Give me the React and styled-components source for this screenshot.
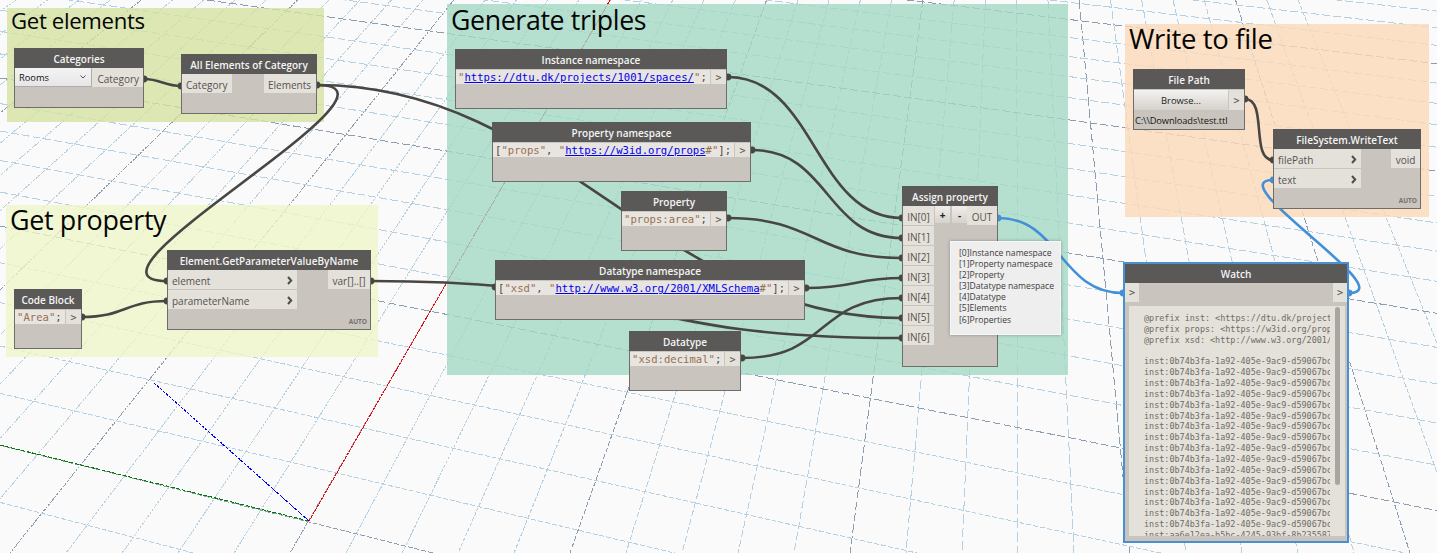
import React from "react";
import styled, { createGlobalStyle } from "styled-components";

const Global = createGlobalStyle`
  html, body { margin: 0; padding: 0; background: #fafafa; }
  #root { width: 1437px; height: 553px; }
`;

const Canvas = styled.div`
  position: relative;
  width: 1437px;
  height: 553px;
  overflow: hidden;
  background: #fafafa;
  font-family: "Open Sans", "Noto Sans", sans-serif;
`;

const Layer = styled.svg`
  position: absolute;
  left: 0;
  top: 0;
  width: 1437px;
  height: 553px;
  z-index: ${(p) => p.$z};
`;

const Group = styled.section`
  position: absolute;
  left: ${(p) => p.$x}px;
  top: ${(p) => p.$y}px;
  width: ${(p) => p.$w}px;
  height: ${(p) => p.$h}px;
  background: ${(p) => p.$bg};
  z-index: 1;
`;

const GroupTitle = styled.h2`
  margin: 0;
  padding: 0 0 0 4px;
  font-size: ${(p) => p.$size}px;
  line-height: ${(p) => p.$line}px;
  font-weight: 400;
  color: #050505;
  letter-spacing: -0.35px;
  white-space: nowrap;
`;

const NodeBox = styled.article`
  position: absolute;
  left: ${(p) => p.$x}px;
  top: ${(p) => p.$y}px;
  width: ${(p) => p.$w}px;
  height: ${(p) => p.$h}px;
  box-sizing: border-box;
  background: #c9c4bd;
  border: ${(p) => (p.$selected ? "2px solid #4a8fcf" : "1px solid #6f6d69")};
  z-index: 3;
  display: flex;
  flex-direction: column;
`;

const Header = styled.header`
  flex: 0 0 ${(p) => (p.$selected ? 19 : 20)}px;
  box-sizing: border-box;
  padding-top: 1px;
  background: #5b5957;
  color: #f4f4f4;
  font-size: 10px;
  font-weight: 600;
  display: flex;
  align-items: center;
  justify-content: center;
  white-space: nowrap;
  margin: ${(p) => (p.$selected ? 0 : "-1px -1px 0")};
`;

const Columns = styled.div`
  display: flex;
  justify-content: space-between;
  align-items: flex-start;
`;

const Stack = styled.div`
  display: flex;
  flex-direction: column;
  gap: ${(p) => p.$gap || 0}px;
`;

const Port = styled.div`
  width: ${(p) => (p.$w ? `${p.$w}px` : "auto")};
  height: ${(p) => p.$h || 19}px;
  box-sizing: border-box;
  padding: 2px 4px 0;
  background: #e4e0da;
  color: #55524f;
  font-size: 10px;
  display: flex;
  align-items: center;
  justify-content: ${(p) => p.$justify || "space-between"};
  white-space: nowrap;
`;

const Chevron = () => (
  <svg width="6" height="9" viewBox="0 0 6 9" fill="none">
    <path d="M1 1l3.2 3.5L1 8" stroke="#4f4d4a" strokeWidth="2" />
  </svg>
);

const Dropdown = styled.div`
  width: 77px;
  height: 19px;
  box-sizing: border-box;
  padding: 0 5px 0 4px;
  background: linear-gradient(#f4f4f4, #e6e6e6);
  border-right: 1px solid #b0aeab;
  border-bottom: 1px solid #b0aeab;
  color: #111;
  font-size: 9.3px;
  display: flex;
  align-items: center;
  justify-content: space-between;
`;

const CodeRow = styled.div`
  display: flex;
  height: ${(p) => p.$h || 14}px;
  margin-top: 1px;
  gap: 1px;
`;

const CodeText = styled.div`
  flex: 1;
  min-width: 0;
  background: #e8e4df;
  padding-left: 2px;
  font-family: "DejaVu Sans Mono", "Liberation Mono", monospace;
  font-size: 10.6px;
  line-height: 14px;
  white-space: nowrap;
  overflow: hidden;
  color: #4d4a47;
`;

const Str = styled.span`
  color: #96714f;
`;

const Link = styled.a`
  color: #0000ee;
  text-decoration: underline;
`;

const Out = styled.div`
  flex: 0 0 ${(p) => p.$w || 15}px;
  height: ${(p) => (p.$h ? `${p.$h}px` : "auto")};
  background: #e4e0da;
  color: #55524f;
  font-family: "DejaVu Sans Mono", "Liberation Mono", monospace;
  font-size: 10px;
  display: flex;
  align-items: center;
  justify-content: center;
`;

const Auto = styled.span`
  position: absolute;
  right: 3px;
  bottom: 3px;
  font-size: 6.5px;
  line-height: 8px;
  font-weight: 700;
  color: #75726e;
`;

const Controls = styled.div`
  display: flex;
  flex: 1;
  gap: 2px;
  padding-left: 1px;
`;

const RoundBtn = styled.div`
  width: 15px;
  height: 17px;
  background: linear-gradient(#f0eeeb, #d6d2cc);
  color: #222;
  font-size: 10px;
  font-weight: 700;
  display: flex;
  align-items: center;
  justify-content: center;
`;

const Browse = styled.div`
  flex: 1;
  background: linear-gradient(#f3f2f0, #d5d1cb);
  color: #222;
  font-size: 9.4px;
  display: flex;
  align-items: center;
  justify-content: center;
`;

const PathText = styled.div`
  padding: 4px 0 0 1px;
  font-size: 9.3px;
  line-height: 14px;
  color: #151515;
  white-space: nowrap;
  letter-spacing: -0.1px;
`;

const Tooltip = styled.aside`
  position: absolute;
  left: 950px;
  top: 241px;
  width: 111px;
  height: 94px;
  box-sizing: border-box;
  padding: 6px 0 0 8px;
  background: #eeeeee;
  border: 1px solid #f6f6f6;
  box-shadow: 0 0 3px rgba(70, 70, 70, 0.45);
  color: #3b3b3b;
  font-size: 8.6px;
  line-height: 11.1px;
  white-space: nowrap;
  z-index: 5;
`;

const WatchPanel = styled.div`
  margin: 4px 2px 5px 4px;
  position: relative;
  flex: 1;
  background: #e4e0da;
  overflow: hidden;
`;

const WatchText = styled.pre`
  margin: 0;
  position: absolute;
  left: 15px;
  top: 7px;
  width: 186px;
  height: 224px;
  overflow: hidden;
  font-family: "DejaVu Sans Mono", "Liberation Mono", monospace;
  font-size: 8.45px;
  line-height: 10.85px;
  color: #706c67;
`;

const ScrollThumb = styled.div`
  position: absolute;
  top: 1px;
  left: 206px;
  width: 5px;
  height: 178px;
  border-radius: 3px;
  background: #a9a5a0;
`;

const VAX = 1015, VAY = -699;
const VBX = -4323, VBY = -630;
const B0 = (k) => -686 + 1 / (0.000884 + 0.0000425 * k);

function gridLines() {
  const lines = [];
  for (let k = -22; k <= 22; k++) {
    const x553 = 290 + 56 * k;
    const at = (y) => VAX + ((x553 - VAX) * (y - VAY)) / (553 - VAY);
    const major = k % 5 === 0;
    const slope = Math.abs((x553 - VAX) / (553 - VAY));
    const t = Math.min(1, slope / 0.55);
    lines.push({
      key: `a${k}`,
      x1: at(0), y1: 0, x2: at(553), y2: 553,
      stroke: major ? "#8b9daf" : "#b5d0e3",
      dash: `${(10 - 7.6 * t).toFixed(1)} ${(4 - 3 * t).toFixed(1)}`,
    });
  }
  for (let k = -4; k <= 28; k++) {
    const y0 = B0(k);
    const s = (y0 - VBY) / (0 - VBX);
    const major = k % 5 === 0;
    lines.push({
      key: `b${k}`,
      x1: 0, y1: y0, x2: 1437, y2: y0 + s * 1437,
      stroke: major ? "#8b9daf" : "#b5d0e3",
      dash: s > 0.2 ? "5 2" : "8 3",
    });
  }
  return lines;
}

const Grid = () => (
  <Layer $z={0} viewBox="0 0 1437 553" shapeRendering="crispEdges" fill="none">
    {gridLines().map((l) => (
      <line key={l.key} x1={l.x1} y1={l.y1} x2={l.x2} y2={l.y2} stroke={l.stroke} strokeDasharray={l.dash} />
    ))}
    <line x1="0" y1="445" x2="309" y2="521" stroke="#007a00" strokeDasharray="4 1.5" />
    <line x1="154" y1="383" x2="309" y2="521" stroke="#0000e6" strokeDasharray="3 1" />
    <line x1="309" y1="521" x2="610" y2="0" stroke="#f00000" strokeDasharray="3 1" />
  </Layer>
);

const dark = [
  "M144 79C160 79 165 86 181 86",
  "M317 85C427 85 57 281 167 281",
  "M317 85C560 85 660 318 902 318",
  "M371 281C650 281 620 338 902 338",
  "M728 77C815 77 815 218 902 218",
  "M752 150C830 150 825 238 902 238",
  "M728 218C815 218 815 258 902 258",
  "M806 288C855 288 855 278 902 278",
  "M742 358C830 358 815 298 902 298",
  "M82 317C125 317 125 301 167 301",
  "M1245 99C1268 99 1250 160 1273 160",
];
const blue = [
  "M998 218C1060 218 1060 293 1123 293",
  "M1349 293C1404 293 1218 180 1273 180",
];
const darkEnds = [
  [144, 79], [181, 86], [317, 85], [167, 281], [371, 281], [495, 287], [902, 318], [902, 338],
  [728, 77], [902, 218], [752, 150], [902, 238], [728, 218], [902, 258], [806, 288], [902, 278],
  [742, 358], [902, 298], [82, 317], [167, 301], [1245, 99], [1273, 160],
];
const blueEnds = [[998, 218], [1123, 293], [1349, 293], [1273, 180]];

const Wires = () => (
  <Layer $z={2} viewBox="0 0 1437 553" fill="none">
    {dark.map((d) => (
      <path key={d} d={d} stroke="#474644" strokeWidth="2.6" />
    ))}
    {blue.map((d) => (
      <path key={d} d={d} stroke="#4390d8" strokeWidth="2.6" />
    ))}
    {darkEnds.map(([x, y]) => (
      <circle key={`${x}-${y}`} cx={x} cy={y} r="3.4" fill="#474644" />
    ))}
    {blueEnds.map(([x, y]) => (
      <circle key={`${x}-${y}`} cx={x} cy={y} r="3.4" fill="#4390d8" />
    ))}
  </Layer>
);

const Node = ({ title, x, y, w, h, selected, children }) => (
  <NodeBox $x={x} $y={y} $w={w} $h={h} $selected={selected}>
    <Header $selected={selected}>{title}</Header>
    {children}
  </NodeBox>
);

const In = ({ label, w }) => (
  <Port $w={w}>
    {label}
    <Chevron />
  </Port>
);

const prefixes = [
  "@prefix inst: <https://dtu.dk/projects/1001/spaces/> .",
  "@prefix props: <https://w3id.org/props#> .",
  "@prefix xsd: <http://www.w3.org/2001/XMLSchema#> .",
  "",
];
const inst = "inst:0b74b3fa-1a92-405e-9ac9-d59067bc1e77 props:area \"21.4\"^^xsd:decimal .";
const watchText = [...prefixes, ...Array(16).fill(inst), "inst:aa6e12ea-b5bc-4245-93bf-8b235587c0d1 props:area"].join("\n");

export default function App() {
  return (
    <Canvas>
      <Global />
      <Grid />
      <Group $x={7} $y={8} $w={317} $h={114} $bg="rgba(212,226,161,.8)">
        <GroupTitle $size={22.2} $line={26}>Get elements</GroupTitle>
      </Group>
      <Group $x={6} $y={205} $w={372} $h={152} $bg="rgba(238,246,200,.8)">
        <GroupTitle $size={26.9} $line={30}>Get property</GroupTitle>
      </Group>
      <Group $x={447} $y={4} $w={621} $h={371} $bg="rgba(164,216,196,.8)">
        <GroupTitle $size={26.7} $line={32}>Generate triples</GroupTitle>
      </Group>
      <Group $x={1125} $y={24} $w={304} $h={193} $bg="rgba(253,218,185,.8)">
        <GroupTitle $size={27.5} $line={30}>Write to file</GroupTitle>
      </Group>
      <Wires />

      <Node title="Categories" x={14} y={48} w={130} h={60}>
        <Columns>
          <Dropdown>
            Rooms
            <svg width="6" height="4" viewBox="0 0 6 4" fill="none">
              <path d="M.5.5L3 3 5.5.5" stroke="#555" />
            </svg>
          </Dropdown>
          <Port $w={51} $justify="flex-end">Category</Port>
        </Columns>
      </Node>

      <Node title="All Elements of Category" x={181} y={54} w={136} h={60}>
        <Columns>
          <Port $w={50}>Category</Port>
          <Port $w={52}>Elements</Port>
        </Columns>
      </Node>

      <Node title="Element.GetParameterValueByName" x={167} y={250} w={204} h={80}>
        <Columns>
          <Stack $gap={1}>
            <In label="element" w={129} />
            <In label="parameterName" w={129} />
          </Stack>
          <Port $w={42} $justify="center">var[]..[]</Port>
        </Columns>
        <Auto>AUTO</Auto>
      </Node>

      <Node title="Code Block" x={14} y={289} w={68} h={60}>
        <CodeRow>
          <CodeText><Str>"Area"</Str>;</CodeText>
          <Out>&gt;</Out>
        </CodeRow>
      </Node>

      <Node title="Instance namespace" x={455} y={49} w={272} h={60}>
        <CodeRow>
          <CodeText><Str>"</Str><Link>https://dtu.dk/projects/1001/spaces/</Link><Str>"</Str>;</CodeText>
          <Out>&gt;</Out>
        </CodeRow>
      </Node>

      <Node title="Property namespace" x={492} y={122} w={259} h={60}>
        <CodeRow>
          <CodeText>[<Str>"props"</Str>, <Str>"</Str><Link>https://w3id.org/props</Link><Str>#"</Str>];</CodeText>
          <Out>&gt;</Out>
        </CodeRow>
      </Node>

      <Node title="Property" x={621} y={191} w={106} h={60}>
        <CodeRow>
          <CodeText><Str>"props:area"</Str>;</CodeText>
          <Out>&gt;</Out>
        </CodeRow>
      </Node>

      <Node title="Datatype namespace" x={495} y={260} w={310} h={60}>
        <CodeRow>
          <CodeText>[<Str>"xsd"</Str>, <Str>"</Str><Link>http://www.w3.org/2001/XMLSchema</Link><Str>#"</Str>];</CodeText>
          <Out>&gt;</Out>
        </CodeRow>
      </Node>

      <Node title="Datatype" x={629} y={331} w={112} h={60}>
        <CodeRow>
          <CodeText><Str>"xsd:decimal"</Str>;</CodeText>
          <Out>&gt;</Out>
        </CodeRow>
      </Node>

      <Node title="Assign property" x={902} y={186} w={96} h={181}>
        <Columns>
          <Stack $gap={1}>
            {[0, 1, 2, 3, 4, 5, 6].map((i) => (
              <Port key={i} $w={31} $justify="center">{`IN[${i}]`}</Port>
            ))}
          </Stack>
          <Controls>
            <RoundBtn>+</RoundBtn>
            <RoundBtn>-</RoundBtn>
          </Controls>
          <Port $w={30} $justify="center">OUT</Port>
        </Columns>
      </Node>

      <Node title="File Path" x={1133} y={69} w={112} h={61}>
        <CodeRow $h={20}>
          <Browse>Browse...</Browse>
          <Out>&gt;</Out>
        </CodeRow>
        <PathText>{"C:\\\\Downloads\\test.ttl"}</PathText>
      </Node>

      <Node title="FileSystem.WriteText" x={1273} y={129} w={148} h={80}>
        <Columns>
          <Stack $gap={1}>
            <In label="filePath" w={87} />
            <In label="text" w={87} />
          </Stack>
          <Port $w={29} $justify="center">void</Port>
        </Columns>
        <Auto>AUTO</Auto>
      </Node>

      <Node title="Watch" x={1123} y={262} w={226} h={281} selected>
        <Columns>
          <Out $w={14} $h={19}>&gt;</Out>
          <Out $w={14} $h={19}>&gt;</Out>
        </Columns>
        <WatchPanel>
          <WatchText>{watchText}</WatchText>
          <ScrollThumb />
        </WatchPanel>
      </Node>

      <Tooltip>
        [0]Instance namespace<br />
        [1]Property namespace<br />
        [2]Property<br />
        [3]Datatype namespace<br />
        [4]Datatype<br />
        [5]Elements<br />
        [6]Properties
      </Tooltip>
    </Canvas>
  );
}
